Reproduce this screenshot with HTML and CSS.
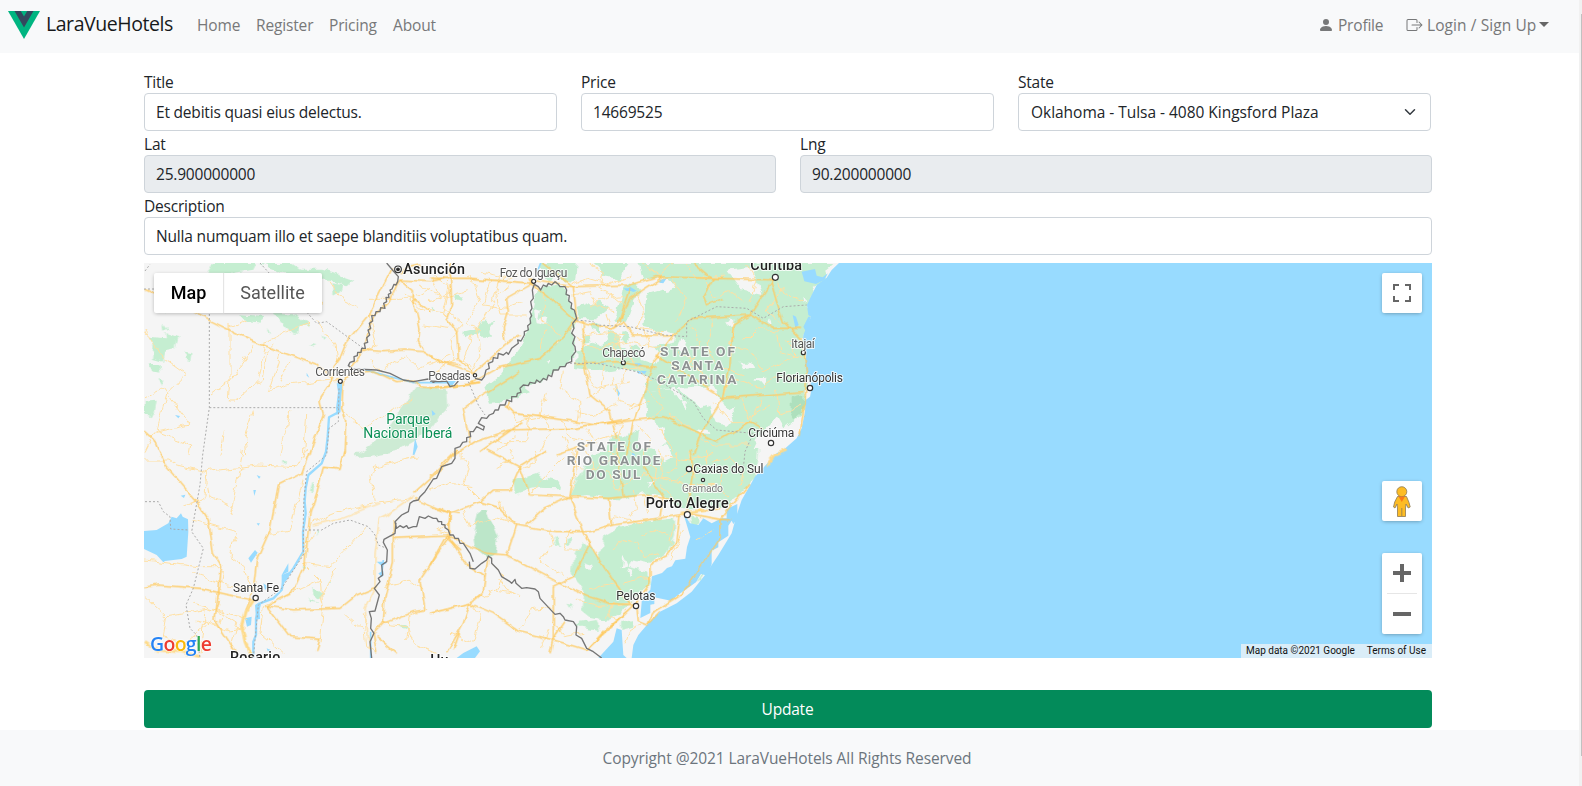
FILE: index.html
```html
<!DOCTYPE html>
<html lang="en">
<head>
<meta charset="utf-8">
<title>LaraVueHotels</title>
<link rel="stylesheet" href="styles.css">
</head>
<body>
<div class="page">
  <nav class="navbar">
    <a class="brand">
      <svg class="logo" viewBox="0 0 32 28"><path fill="#00b581" d="M0 0h32L16 28z"/><path fill="#34495e" d="M6.5 0h6.3L16 5.500 19.200 0h6.300L16 16.500z"/></svg>
      <span class="brand-name">LaraVueHotels</span>
    </a>
    <div class="links">
      <a class="l-home">Home</a><a class="l-register">Register</a><a class="l-pricing">Pricing</a><a class="l-about">About</a>
    </div>
    <div class="account">
      <a class="profile"><svg width="16" height="16" viewBox="0 0 16 16"><path fill="currentColor" d="M3 14s-1 0-1-1 1-4 6-4 6 3 6 4-1 1-1 1H3zm5-6a3 3 0 1 0 0-6 3 3 0 0 0 0 6z"/></svg><span>Profile</span></a>
      <a class="login"><svg width="17" height="16" viewBox="0 0 16 16" fill="currentColor"><path d="M10 12.500a.5.5 0 0 1-.5.5h-8a.5.5 0 0 1-.5-.5v-9a.5.5 0 0 1 .5-.5h8a.5.5 0 0 1 .5.5v2a.5.5 0 0 0 1 0v-2A1.500 1.500 0 0 0 9.500 2h-8A1.500 1.500 0 0 0 0 3.500v9A1.500 1.500 0 0 0 1.500 14h8a1.500 1.500 0 0 0 1.500-1.500v-2a.5.5 0 0 0-1 0v2z"/><path d="M15.854 8.354a.5.5 0 0 0 0-.708l-3-3a.5.5 0 0 0-.708.708L14.293 7.500H5.500a.5.5 0 0 0 0 1h8.793l-2.147 2.146a.5.5 0 0 0 .708.708l3-3z"/></svg><span>Login / Sign Up</span><i class="caret"></i></a>
    </div>
  </nav>

  <main class="content">
    <div class="row row-three">
      <div class="field"><label>Title</label><div class="control"><span>Et debitis quasi eius delectus.</span></div></div>
      <div class="field"><label>Price</label><div class="control"><span>14669525</span></div></div>
      <div class="field"><label>State</label><div class="control select"><span class="t-state">Oklahoma - Tulsa - 4080 Kingsford Plaza</span><svg width="16" height="12" viewBox="0 0 16 16"><path fill="none" stroke="#343a40" stroke-linecap="round" stroke-linejoin="round" stroke-width="2" d="M2 5l6 6 6-6"/></svg></div></div>
    </div>
    <div class="row row-two">
      <div class="field"><label>Lat</label><div class="control readonly"><span>25.900000000</span></div></div>
      <div class="field"><label>Lng</label><div class="control readonly"><span>90.200000000</span></div></div>
    </div>
    <div class="field"><label>Description</label><div class="control"><span class="t-desc">Nulla numquam illo et saepe blanditiis voluptatibus quam.</span></div></div>

    <div class="map">
      <svg class="tiles" viewBox="42 24 3864 1185">
        <defs>
          <filter id="bend" filterUnits="userSpaceOnUse" x="0" y="0" width="2200" height="1240" color-interpolation-filters="sRGB"><feTurbulence type="fractalNoise" baseFrequency="0.03" numOctaves="2" seed="4"/><feDisplacementMap in="SourceGraphic" scale="16" xChannelSelector="R" yChannelSelector="G"/></filter>
          <filter id="wiggle" filterUnits="userSpaceOnUse" x="0" y="0" width="2200" height="1240" color-interpolation-filters="sRGB"><feTurbulence type="fractalNoise" baseFrequency="0.035" numOctaves="2" seed="9"/><feDisplacementMap in="SourceGraphic" scale="24" xChannelSelector="R" yChannelSelector="G"/></filter>
        </defs>
        <rect class="land" x="42" y="24" width="3864" height="1185"/>

        <g class="green" filter="url(#wiggle)">
          <path d="M250 24h130l-10 20-60 10-25 25-50-20zM390 24h90l30 20 70 0 60 20 30 10-20 20-50-20-60 0-60-15zM610 85l28 5-8 22-20 10zM60 245l40 5 10-12 35 12-8 30-30 5-8 35-30-8 5-45zM165 290l22 5-3 20-20-4zM60 330l28 0 3 20-25-5zM85 370l18 3-5 18zM47 440l30-3-5 30-10 20-15-8zM78 152l30 0-3 18-15-8zM100 205l15 20-12 5zM245 150l30 5-15 15zM330 178l70 5-10 20-40-5zM415 215l8 22-8-5zM430 175l60 0 50 35-30 5-10 22-30-15zM537 265l25 5-10 5zM905 155l10 8-10 8zM575 240l15 5-10 6z"/>
          <path fill="#cdebd4" d="M860 395L950 402 955 455 930 480 905 515 850 560 800 590 690 612 675 600 760 545 800 480z"/>
          <path d="M460 615l8 8-8 3zM548 675l5 10-3 30-10-5zM555 830l12 5-8 8zM522 928l8 5-8 8zM550 995l28 20-5 15-20-10zM533 1030l35 10-30-2zM595 977l12 3-8 5zM805 1112l20-5 10 10-15 8z"/>
          <g transform="translate(900 0)">
            <path d="M320 105L380 85 408 105 438 190 425 235 437 290 415 325 370 350 340 375 280 395 300 412 225 438 180 440 165 395 205 365 285 255 300 200z"/>
            <path d="M100 230l40-10 25-30 10 15 18-5-15 25 5 20-30 0-5-10-40 15zM78 120l20 5-5 15-18-5zM330 24h110l-5 60-30-5-25-15-25 10-20-20zM440 160l40-15 30-5 25 20-35 30-50 0zM490 24h105l-20 50-55-10-10-25zM580 95l30-15 25 30-25 30-20 60-40 0 15-40zM440 290l50-30 30 10 30-30 20 35 60 0 5 40 45 15 8 35-40-5-60-20-60 10-90-10zM480 200l30 10 0 20-20-5zM530 225l30 10 5 20-30-5zM455 240l20 0 10 20-25 5zM575 225l20 10-5 30-20-10z"/>
            <path d="M625 24H1210L1185 45 1195 75 1160 90 1130 150 1143 185 1120 240 1118 265 1130 300 1125 330 1135 365 1128 420 1125 470 1060 520 1040 485 985 545 960 600H800L830 530 770 450 735 395 650 410 660 340 690 300 675 275 735 262 740 240 640 215 650 115 735 90 690 65 640 80z"/>
            <path d="M740 430L780 450 840 530 820 600H530L540 540 590 545 630 520 625 580 680 585 710 560 700 520 650 480 640 410 720 400z"/>
            <path fill="#aee0bd" d="M1085 425l35-8 0 50-25 20-10-20z"/>
          </g>
          <g transform="translate(900 585)">
            <path d="M490 15L530 0H985L975 85 925 140 900 160 870 175 740 175 700 140 640 130 590 150 530 145 470 135 420 140 440 90zM250 95l60-20 15-5 20 15 45 10-5 20-60-2-40 10-30 10z"/>
            <path fill="#bce6c9" d="M150 180l20 0 18 45 15 40-8 45-25 10-35-30-5-30z"/>
            <path d="M518 260L560 235 640 215 735 205 735 255 715 310 655 340 600 330 590 350 655 365 660 400 615 440 570 490 530 510 480 500 455 480 460 420 440 400 425 370 430 330 455 270 510 320zM370 258l15 10 5 20-15-3zM405 275l20-10-5 20zM775 200l30 5 0 15-15 10zM830 355l0 10-20 25-10 5zM410 455l18 5-10 15zM440 520l60-10 10 30-60-10zM570 520l40-10 0 20-40 10z"/>
          </g>
        </g>
        <g class="land" filter="url(#wiggle)">
          <path d="M1215 160l15 5-5 30 30-5-5 20-30-5zM1280 245l5 20-8 0zM1320 130l30-15-8 32-15-2zM1250 320l12-5-5 15zM1790 45l70-10 15 30 20 55-60-15-30-40zM1590 95l40-10 10 15-30 8zM2020 125l12 10-8 10zM1785 205l25-15 0 20-20 5zM1825 320l35 0 10 15-30 5zM1870 370l40-2-10 25-12-15zM1795 470l25-15 0 15-20 20zM1915 190l5 20-8-5zM1520 285l40 8 10 30-30-15zM1480 270l20 0-8 25zM1640 400l110-10 20 40 35 60-15 20-30-10-20-50-30 10zM1650 250l20 10-10 30-20-10zM1500 730l20 0-8 15zM1565 580l45-10 20 40-30 15zM1555 675l15 0-8 18zM1515 1045l40-30-10 30zM1655 440l20 5-5 15zM1700 520l30 5 5 15-25-3zM1480 905l10 25-15 10zM1490 940l20 5-10 20zM1575 915l40-8-20 20zM1360 925l25 8-10 15z"/>
        </g>

        <g class="water">
          <path d="M2127 24L2105 45 2090 68 2060 90 2045 120 2031 150 2035 180 2043 185 2030 215 2020 240 2018 265 2030 290 2025 330 2035 370 2046 395 2040 425 2027 435 2025 470 2015 520 2000 550 1960 585 1940 595 1875 665 1835 735 1820 780 1805 835 1765 900 1725 960 1685 1010 1640 1045 1590 1070 1555 1105 1525 1140 1510 1170 1505 1209H3906V24z"/>
          <path d="M2015 50l40-8 5 20 18 5 15-12-10 20-25 12-35-8zM1988 180l10 5 8 25-10 8zM2035 185l8 0-15 45-8-15z"/>
          <path d="M42 828L80 825 115 805 125 785 140 790 153 775 158 785 174 793 175 830 170 905 155 912 105 918 100 922 80 900 42 882z"/>
          <path d="M620 385l16 0 0 20-8 70-8 5-2-20 6-50zM945 378l33 0-15 18zM905 465l12 12-10 5zM855 550l8 25-10 25-5 0z"/>
          <path d="M1660 775l20 30 25 5 15-20 25 15 30-15 15 0 0-28 32-15 0 45-12 15-5-10-10 15 0 30-30 20 0 15-20 10 0 40-12 35-20-5-15 25-50 35-25 20-50-10 0 20-12 2 0 25-30 15 5-60 25-25 5-40 30-10 15-15 15-5 10-18 30-5 5-35 10-30z"/>
          <path d="M1405 1209L1450 1160 1460 1120 1475 1125 1480 1200 1490 1209zM980 1209l20-15 40-20 10 15-15 20zM1500 95l20 12-10 4-20-8zM1588 75l22-5-10 15-12-2zM1480 100l10 0 15 0 10 8-25 0zM1455 390l15 25-5 10zM1506 590l10 10-8 8zM1510 325l20 0 10 8-22 0zM1410 320l20 5-15 2zM1520 348l30 0-5 8-20 0z"/>
          <path d="M375 1050l12-8 3 50-12 2zM345 1090l20-5-2 25-12 5zM400 985l15 10-10 10zM475 925l0 25-20 10zM355 910l20-25 8 8-20 30zM370 705l8 0-5 18zM380 660l12 5-5 6zM380 805l10 0-5 7zM152 722l14-3-4 10zM410 1180l12 5-8 5zM740 920l20 0 10 5-15 8zM745 955l15-8 0 15-5 5zM455 960l25-10-5 20-20 20zM135 480l15 3-5 7zM530 353l8 15-8-6z"/>
          <path class="river" stroke-width="7" d="M630 390L628 470 597 487 593 545 588 590 575 625 535 660 527 700 524 740 527 775 519 830 520 890 490 940 460 980 455 1005 430 1030 390 1045 378 1090 378 1140 370 1160 370 1209"/>
          <path class="river" stroke-width="5" d="M700 343L800 370 850 383 960 383M722 1130L722 1209M1232 24L1222 50M760 915L755 960"/>
        </g>

        <g class="minor" filter="url(#wiggle)">
          <path d="M45 220L100 310 170 360 110 420 80 530 180 510 100 400 42 430M80 520L45 590M80 530L185 570 180 600M300 220L350 195M300 210L300 375 375 270M300 375L240 420M320 435L375 385 400 375 410 290 430 270M320 435L295 435 300 375M540 205L470 230 410 260 380 380M450 300L415 410 470 390 630 372M480 320L450 380M560 200L615 270 620 320M280 530L270 600M370 470L345 550 350 600M480 470L450 600M530 480L520 600M370 85L400 120 360 155M430 120L550 110 580 150M600 80L640 140 680 160M720 180L740 270 700 290M720 310L750 350 830 300 870 340 960 300M720 130L850 130 900 100M960 90L940 160 1000 210 960 250 970 320M870 90L950 130 1010 110M880 210L960 220M820 115L870 160 940 170M900 60L930 130M640 470L700 520 850 430"/>
          <path transform="translate(0 585)" d="M45 30L120 30 140 45 230 65 380 45 500 50 530 0M230 65L240 140 310 170 300 200 340 0M230 70L225 140 160 170M190 210L320 245 300 320 340 350 370 420M45 330L200 350 270 350M190 370L270 400 370 420M45 440L110 500 250 475 360 510M110 500L100 560 160 580 250 510M190 460L260 480 320 520 300 600M200 510L300 540 350 530M225 480L210 610M280 480L270 520M280 360L265 480M720 80L735 160 640 180 540 220M735 160L850 145M710 230L600 350 520 340 570 390 580 480 570 580M510 330L550 250M570 390L400 470 390 550 460 610M520 90L500 160 480 240 420 250M760 410L840 390 880 420M750 520L830 530 850 580 920 610M880 480L840 500 830 570M700 490L710 590 740 610M640 490L700 540M720 80L740 50 860 20M580 480L570 440 620 360"/>
          <path transform="translate(900 0)" d="M10 60L60 100 40 180M120 60L150 140 110 200 150 230M150 50L240 70 260 60M210 60L190 140 140 220 150 300 120 360M240 90L200 120 210 180 290 180M0 140L50 120 60 40M180 70L160 150 230 160 280 140M0 360L80 310 130 340M130 240L100 320M340 110L340 200 390 240M350 220L330 290M480 30L520 50 510 100 560 130 620 120M430 120L480 110 500 150 550 170M460 200L460 320 500 400M530 180L560 260 550 330M440 250L500 280 600 260 690 280M560 240L580 340 640 340M620 120L640 170 620 220 700 230M640 24L690 60 730 24M720 70L770 130 740 200M760 24L800 70 880 60M820 60L850 130 900 110 940 140M950 30L980 80 960 140M1040 80L1080 130 1120 140M1060 100L1010 170 1060 210M910 200L900 270 960 290 1000 350 1100 300 1070 260 1120 250M780 210L810 260 780 330 850 380M850 190L830 270 860 330 940 360M940 260L980 220 1050 230M1040 240L1050 290 1120 310M880 430L900 370 990 400 1050 360 1110 370M740 290L790 320 820 370M930 420L950 490 1020 450M850 440L900 500 960 500 1000 430M1040 410L1050 480 1110 450M240 460L260 500 360 480M350 410L330 480 360 520M400 350L390 400 450 440 440 510M500 400L600 380M550 370L570 440 620 450M640 390L700 460 650 500M690 520L730 590M540 540L610 590M580 510L560 590M360 530L330 590M400 540L420 590M470 520L490 560 570 530M720 480L780 520 850 570 960 570M620 500L660 550 640 600M720 350L680 400 700 430M430 90L470 70 540 90 600 60M480 150L540 120 590 160M460 240L520 230 580 240M600 270L610 330 660 380M640 220L660 280M520 330L510 400 470 430M590 340L570 400M440 470L500 480 560 450M390 490L420 550 480 560M300 480L290 560 200 560M200 590L260 540M660 440L600 460"/>
          <path transform="translate(900 585)" d="M80 0L120 40 100 100 150 150M200 50L250 20 240 0M280 50L320 40 310 0M430 50L500 60 560 0M470 0L490 60M420 140L440 80 430 0M530 60L560 120 640 70 700 90M580 40L540 0M640 30L680 60 670 110M690 0L700 90 760 100M740 0L740 50 710 70M780 0L790 80M830 0L830 50 790 60M850 30L900 20 940 60 930 110M690 100L740 160M880 60L870 120 900 140M610 120L620 170 600 200M640 140L650 190M100 180L120 230 200 200 260 220M210 155L230 220M60 215L20 240 60 250M360 235L370 280 330 330 400 380M420 240L400 300 450 300M520 240L550 200 640 220M550 300L570 270 620 280 640 320 690 310M630 260L680 240 720 260M580 400L660 380M480 420L540 400 570 410M440 450L500 470 600 460M200 380L230 420 270 440M180 330L220 380 200 420 250 430M120 460L150 500 130 580 60 550M130 450L200 420M270 540L300 480 370 470M370 510L400 560 460 550M360 540L330 600M550 460L530 500 560 510M585 580L600 540 630 520M720 280L730 220M760 240L720 330M800 270L850 240M700 20L780 30 850 10M660 80L740 90 800 60M760 110L850 100M0 120L60 100 130 110M400 20L360 60 300 130"/>
        </g>
        <g class="major" filter="url(#bend)">
          <path d="M42 102L190 172 370 260 560 330 610 372M610 370L612 335 630 310 650 260 715 180 770 70 785 40M610 370L575 420 570 440 580 480 555 550 540 600M640 380L635 460 650 500 645 600M640 375L660 355 730 348 800 380 850 375 870 395 920 400 1050 385M660 340L700 285 760 290 820 285 880 290 930 320 990 330M705 270L725 190 780 140 800 90 810 75 900 80 940 70M810 75L850 110 850 130 900 170 895 170M850 130L870 220 865 260 880 285M810 60L830 40 870 30M42 525L70 550 85 585"/>
          <path transform="translate(0 585)" d="M85 0L110 50 200 155 235 210 250 310 275 350 255 510 320 610M540 0L515 70 445 105 420 240 380 330 370 420 345 480M645 0L630 58 580 52 560 130 540 190 525 340 485 430 410 468 490 480 630 475 680 435 740 410 M850 130L950 40 980 0M410 468L480 560 570 568 560 600M42 413L80 405 210 415 365 450M855 145L950 185 990 190M960 190L960 250M790 262L960 255 870 390 885 480 850 485 760 520 730 550 740 610M740 560L800 610M990 545L970 600M790 210L790 340 765 440 760 520M945 260L990 300"/>
          <path class="soft" d="M720 1185L705 1060 735 1000 735 900 748 790 770 780 850 725M545 810L630 790 748 745"/>
          <path transform="translate(900 0)" d="M0 70L120 70 310 85M60 24L65 150 50 190 80 230 85 310 130 350M0 305L130 355 250 250 270 240M310 85L230 130 235 170 220 220 225 260M300 70L310 90 350 120 440 200 550 220 580 200 610 240 730 240 790 190 960 180 1030 70M0 400L150 385 M120 385L200 340 330 310 400 245 440 190 430 95 300 75M340 24L430 95 600 90 680 65 850 70 1030 75M850 70L820 120 830 150 880 130M790 24L850 75M600 100L570 190 550 220M700 65L600 130 570 200M960 180L1030 220 1110 220M1020 70L1040 140 1060 200 1120 260 1130 360 1125 440 1110 540M960 180L910 210 900 330 880 430 810 540 790 600M730 240L670 320 640 420 610 500 590 600M430 325L560 320 680 340M460 200L460 310 480 420 540 470 560 550M680 300L880 430 1120 410M225 450L250 475 370 490 500 510 700 485 800 530 860 560 960 500 1000 520M75 600L135 560 240 525 440 520 600 490M380 600L500 560M240 440L230 460M120 565L100 460 140 430 270 350 M280 500L150 590"/>
          <path transform="translate(900 585)" d="M0 80L80 0M170 0L270 50 300 135 420 140 540 145 640 135 730 150M0 170L60 190 150 155 190 120 240 120 270 50 350 0M150 155L210 175 260 225 380 245 480 245 550 225 750 195 870 175M290 225L350 170 420 140 440 0M420 140L460 250 480 280 430 380 390 400 370 410 370 560 360 610M535 145L545 225M460 250L520 350 600 460M560 0L580 140M640 50L700 140 690 200M780 0L790 60 770 180M750 195L740 280 710 320 660 345 660 395 615 460M0 345L50 255 170 310 230 315 390 400 480 440 540 460 610 465 470 600 370 570 270 545 190 490 120 460 0 490M55 250L60 190M260 225L230 315M55 260L110 345 165 380 160 425 120 460 100 520 50 610M175 320L165 380M620 460L625 515 650 525 665 490 750 435 780 400 870 265 870 210 900 170 960 100M650 525L690 485M370 565L405 515M470 600L530 535 600 475M770 190L870 208 900 210"/>
          <path class="wide" d="M368 1035L345 1070 335 1110 345 1160 365 1209M42 1160L80 1185 150 1190 210 1205M1655 775L1720 765M1970 585L1935 600 1910 630"/>
        </g>

        <g class="state"><path d="M238 165V458L218 600 210 690 185 830 220 880 190 1000 168 1050 180 1120 200 1140 210 1209M238 458H625M42 102H75M45 48L60 28M390 24L450 90 520 160 560 205 590 200 700 280M45 740H85L100 770 120 785 122 822 175 825M627 400L625 500 597 520 590 600 530 650 522 730 520 790 520 900 455 1000 385 1050 370 1209M525 825L575 825 610 805 660 795 715 815 735 840 745 870 770 880"/><path transform="translate(900 0)" d="M115 380L145 450 165 480M440 195L490 200 500 210 600 215 700 240 770 245 770 200 810 180 860 155 950 160 1000 190 1060 155 1130 150M420 325L500 325 620 350 680 375 740 410 790 440 820 490 860 525 970 535 945 590 940 640 930 665"/></g>
        <g class="country"><path d="M770 24L790 48 805 65 803 80 798 90 792 88 786 102 780 105 783 114 775 118 777 128 768 127 770 140 761 145 765 160 752 158 750 170 738 170 735 182 725 182 728 198 718 205 722 220 714 225 719 240 710 248 713 262 703 265 706 280 695 280 693 292 683 292 682 302 672 305 673 318 660 322 655 332 670 342 740 345 780 355 820 375 850 380 895 372 910 382 920 378 M900 378L930 380 950 378 960 395 973 392 985 378M1035 370L1055 375 1063 365 1068 345 1078 340 1075 325 1088 320 1090 308 1103 310 1105 295 1120 300 1130 292 1135 298 1145 280 1165 265 1163 255 1173 258 1183 240 1183 230 1195 225 1193 212 1202 205 1200 190 1205 182 1200 170 1206 160 1202 140 1210 130 1207 105 1213 88 1225 95 1232 105 1240 90 1250 95 1255 85 1265 90 1275 80 1285 88 1290 95 1305 95 1310 105 1308 118 1318 122 1316 138 1325 145 1323 160 1333 165 1340 190 1328 205 1332 220 1325 235 1335 245 1328 265 1335 275 1337 290 1325 305 1325 320 1310 325 1305 335 1290 335 1285 345 1270 345 1265 365 1255 360 1250 375 1240 370 1230 382 1220 375 1215 385 1200 382 1195 392 1180 390 1170 400 1173 412 1162 415 1160 425 1145 425 1145 440 1130 435 1125 450 1110 450 1105 465 1095 465 1090 475 1078 480 1070 490 1055 488 1045 505 1063 515 1060 525 1040 515 1030 530 1020 530 1022 545 1010 548 1010 560 998 562 990 575 975 580 975 610 965 625 950 630 935 635 920 670 910 672 885 710 870 725 865 735 850 738 840 745 835 770 815 780 795 800 800 820 810 812 820 818 830 812 835 820 850 815 860 815 868 785 885 790 895 783 910 790 920 790 925 800 935 800 935 808 945 810 945 818 955 825 960 840 970 840 975 850 985 850 990 865 1000 865 1010 880 1020 895 1030 920M798 803L795 835 762 853 760 862 772 885 770 920 755 930 758 960 745 970 750 980 733 1000 748 1020 735 1068 718 1070 724 1090 722 1120 732 1135 720 1160 725 1209M1018 920L1020 940 1035 942 1055 925 1070 915 1075 903 1085 910 1085 925 1105 945 1115 965 1140 980 1145 985 1155 973 1158 985 1175 1000 1190 998 1215 1002 1225 1010 1230 1030 1275 1078 1290 1075 1300 1085 1305 1095 1330 1100 1340 1115 1338 1140 1355 1150 1370 1180 1390 1190 1415 1209"/></g>

        <g class="dots"><circle cx="631" cy="379" r="6"/><circle cx="1035" cy="361" r="5"/><circle cx="1211" cy="79" r="6"/><circle cx="1936" cy="67" r="9"/><circle cx="1480" cy="323" r="6"/><circle cx="2020" cy="293" r="6"/><circle cx="2040" cy="399" r="8"/><circle cx="1923" cy="564" r="8"/><circle cx="1677" cy="642" r="8"/><circle cx="1719" cy="675" r="5"/><circle cx="1672" cy="779" r="9"/><circle cx="1518" cy="1053" r="8"/><circle cx="377" cy="1029" r="8"/><circle cx="804" cy="43" r="10"/><circle cx="804" cy="43" r="4" fill="#222"/></g>
        <g class="labels">
          <g class="city"><text x="820" y="57" textLength="185">Asunción</text><text x="1861" y="46" textLength="155">Curitiba</text><text x="1547" y="772" textLength="249" dy="-14">Porto Alegre</text><text x="300" y="1221" textLength="151">Rosario</text><text x="901" y="1231">Hu</text></g>
          <g class="town"><text x="556" y="362" textLength="149">Corrientes</text><text x="895" y="374" textLength="127">Posadas</text><text x="1109" y="66" textLength="203">Foz do Iguaçu</text><text x="1417" y="306" textLength="129">Chapecó</text><text x="1984" y="280" textLength="70">Itajaí</text></g>
          <g class="town dark"><text x="1939" y="381" textLength="200">Florianópolis</text><text x="1855" y="546" textLength="138">Criciúma</text><text x="1690" y="655" textLength="210">Caxias do Sul</text><text x="1459" y="1035" textLength="117">Pelotas</text><text x="309" y="1010" textLength="138">Santa Fe</text></g>
          <text class="small" x="1656" y="710" textLength="123">Gramado</text>
          <g class="region"><text x="1590" y="304" textLength="225">STATE OF</text><text x="1624" y="346" textLength="156">SANTA</text><text x="1581" y="388" textLength="238">CATARINA</text><text x="1340" y="588" textLength="223">STATE OF</text><text x="1310" y="631" textLength="281">RIO GRANDE</text><text x="1367" y="672" textLength="164">DO SUL</text></g>
          <g class="park"><text x="769" y="507" textLength="131">Parque</text><text x="700" y="549" textLength="267">Nacional Iberá</text></g>
        </g>
      </svg>
      <div class="map-type"><span class="active">Map</span><span>Satellite</span></div>
      <div class="ctl fullscreen"><svg width="18" height="18"><path fill="none" stroke="#666" stroke-width="2" d="M1 6V1h5M12 1h5v5M17 12v5h-5M6 17H1v-5"/></svg></div>
      <div class="ctl pegman"><svg width="18" height="31" viewBox="0 0 18 31"><g fill="#fdbc24" stroke="#8d7a55" stroke-width=".8"><path d="M4.500 10.500h9L16 16.500l1.200 4.500-2 1-2.200-4-.5 4v8.500H4.500V22L4 18l-2 4-1.500-1 1.200-5z"/><circle cx="8.800" cy="5.700" r="5"/><path d="M8.800 22v8"/></g><path fill="#fa7b17" d="M5.500 10.500h6.500L8.800 16z"/></svg></div>
      <div class="ctl zoom"><svg width="40" height="81"><path fill="#666" d="M18 11h4v7h7v4h-7v7h-4v-7h-7v-4h7zM11 59h18v4H11z"/><path fill="#e6e6e6" d="M5 40h30v1H5z"/></svg></div>
      <div class="google"><span class="b">G</span><span class="r">o</span><span class="y">o</span><span class="b">g</span><span class="g">l</span><span class="r">e</span></div>
      <div class="legal"><span>Map data ©2021 Google</span><span>Terms of Use</span></div>
    </div>
    <div class="update"><span>Update</span></div>
  </main>
  <footer class="footer"><span>Copyright @2021 LaraVueHotels All Rights Reserved</span></footer>
</div>
<div class="scrollbar"><div class="thumb"></div></div>
</body>
</html>
```
FILE: styles.css
```css
* { box-sizing: border-box; }
body { margin: 0; width: 1582px; height: 786px; overflow: hidden; display: flex; background: #fff; color: #212529; font: 15.5px/24px "Open Sans", "Noto Sans", sans-serif; letter-spacing: -0.2px; }
.page { width: 1579px; display: flex; flex-direction: column; }
.navbar { height: 53px; background: #f8f9fa; display: flex; align-items: center; padding: 0 0 3px 8px; color: #777879; white-space: nowrap; }
.brand { display: flex; align-items: center; width: 180px; color: #17191b; font-size: 19.5px; letter-spacing: -0.45px; }
.logo { width: 32px; height: 28px; margin-right: 6px; }
.brand-name { padding-bottom: 2px; }
.links { display: flex; flex: 1; padding-left: 9px; letter-spacing: -0.15px; }
.l-home { width: 59px; }
.l-register { width: 73px; }
.l-pricing { width: 64px; }
.account { display: flex; }
.profile, .login { display: flex; align-items: center; }
.profile { width: 88px; gap: 4px; margin-left: -1px; }
.profile svg { margin-top: -1px; }
.login { width: 173px; gap: 4px; letter-spacing: 0.08px; }
.caret { border: 5px solid transparent; border-top-color: #666; border-bottom: 0; margin: -2px 0 0 -1px; }
.content { width: 1288px; margin-left: 144px; padding-top: 16px; height: 677px; }
.row { display: grid; column-gap: 24px; }
.row-three { grid-template-columns: repeat(3, 413px); }
.row-two { grid-template-columns: repeat(2, 632px); }
label { display: block; height: 24px; padding-top: 1px; }
.control { height: 38px; border: 1px solid #ced4da; border-radius: 4px; padding: 0 12px 0 11px; display: flex; align-items: center; white-space: nowrap; }
.t-state { letter-spacing: -0.03px; padding-left: 1px; }
.t-desc { letter-spacing: -0.17px; }
.readonly { background: #e9ecef; }
.select { justify-content: space-between; }
.map { position: relative; height: 395px; margin-top: 8px; overflow: hidden; font-family: Roboto, sans-serif; letter-spacing: 0; }
.tiles { display: block; width: 1288px; height: 395px; }
.land { fill: #f5f5f5; }
.green { fill: #c5eed1; }
.water { fill: #98dbff; }
.river { fill: none; stroke: #98dbff; stroke-linejoin: round; }
.minor { fill: none; stroke: #ffe0a3; stroke-width: 3; }
.major { fill: none; stroke: #fecb63; stroke-width: 4; stroke-linejoin: round; }
.soft { stroke: #ffe0a3; }
.wide { stroke: #fedb8b; stroke-width: 9; }
.state { fill: none; stroke: #aaa; stroke-width: 3; stroke-dasharray: 6 6; }
.country { fill: none; stroke: #757575; stroke-width: 4; stroke-linejoin: round; }
.dots { fill: #fff; stroke: #333; stroke-width: 3.5; }
.labels { paint-order: stroke; stroke: rgba(255, 255, 255, .8); stroke-width: 6; stroke-linejoin: round; fill: #555; }
.city { font-size: 43px; font-weight: 500; fill: #222; }
.town { font-size: 36px; }
.dark { fill: #333; }
.small { font-size: 31px; fill: #777; }
.region { font-size: 41px; font-weight: 700; fill: #8d9192; }
.park { font-size: 42px; fill: #0b8f56; }
.map-type, .ctl { position: absolute; background: #fff; border-radius: 2px; box-shadow: 0 1px 4px -1px rgba(0, 0, 0, .4); }
.map-type { left: 10px; top: 10px; height: 40px; display: flex; align-items: center; font-size: 18px; line-height: 40px; color: #565656; }
.map-type span { width: 99px; text-align: center; }
.map-type .active { width: 69px; color: #000; font-weight: 500; box-shadow: 1px 0 1px #e5e5e5; }
.ctl { right: 10px; width: 40px; height: 40px; display: flex; align-items: center; justify-content: center; }
.fullscreen { top: 10px; }
.pegman { top: 218px; }
.zoom { top: 290px; height: 81px; }
.google { position: absolute; left: 6px; bottom: 2px; font: 600 19.5px/24px "Open Sans", sans-serif; letter-spacing: -0.7px; text-shadow: 0 0 2px #fff, 0 0 2px #fff; }
.b { color: #2583f4; }
.r { color: #ed3c30; }
.y { color: #fbb90b; }
.g { color: #31a952; }
.legal { position: absolute; right: 0; bottom: 0; width: 191px; height: 14px; padding: 0 6px 0 5px; display: flex; justify-content: space-between; background: #daedf8; color: #111; font-size: 10px; line-height: 14px; }
.update { height: 38px; margin-top: 32px; border-radius: 4px; background: #038b5a; color: #fff; display: flex; align-items: center; justify-content: center; }
.update span { margin-right: 1px; }
.footer { height: 56px; background: #f8f9fa; color: #6c757d; display: flex; align-items: center; justify-content: center; padding-right: 5px; letter-spacing: -0.09px; }
.scrollbar { width: 3px; background: #f1f1f1; padding: 14px 0 0 2px; }
.thumb { height: 742px; background: #c1c1c1; }
```
